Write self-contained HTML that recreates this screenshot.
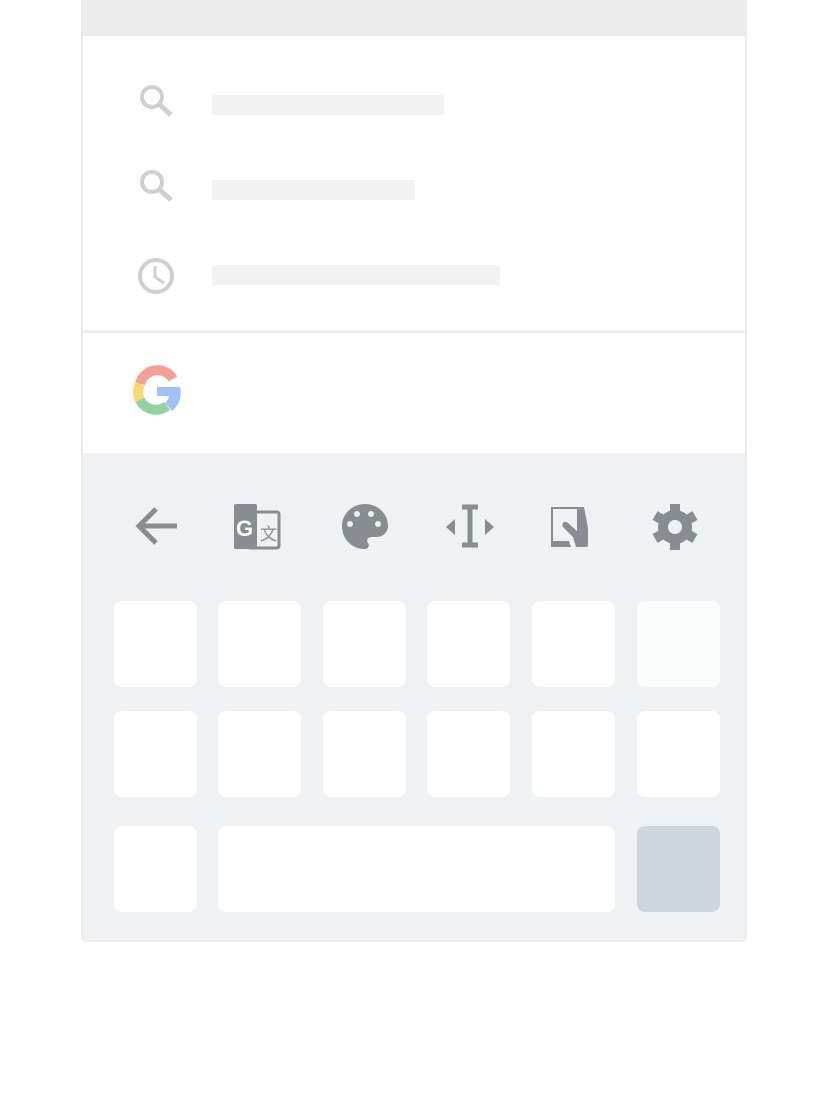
<!DOCTYPE html>
<html><head><meta charset="utf-8"><style>
body{margin:0;width:828px;height:1098px;background:#fff;position:relative;overflow:hidden;font-family:"Liberation Sans",sans-serif}
.frame{position:absolute;left:81px;top:-6px;width:662px;height:944px;border:2px solid #ebebeb;border-radius:6px;background:#fff;overflow:hidden}
.abs{position:absolute}
.key{position:absolute;background:#fff;border-radius:8px;width:83px;height:86px}
</style></head><body>
<div class="frame">
  <div class="abs" style="left:0;top:0;width:662px;height:40px;background:#ececec"></div>
  <div class="abs" style="left:129px;top:99px;width:232px;height:20px;background:#f2f2f2"></div>
  <div class="abs" style="left:129px;top:184px;width:203px;height:20px;background:#f2f2f2"></div>
  <div class="abs" style="left:129px;top:269px;width:288px;height:20px;background:#f2f2f2"></div>
  <div class="abs" style="left:0;top:334px;width:662px;height:3px;background:#ececec"></div>
  <div class="abs" style="left:0;top:457px;width:662px;height:500px;background:#eff1f2"></div>
</div>
<svg class="abs" style="left:0;top:0" width="828" height="1098">
  <g fill="none" stroke="#cfcfcf" stroke-width="4">
    <circle cx="152" cy="97" r="10"/><line x1="159" y1="104" x2="171" y2="115" stroke-width="5"/>
    <circle cx="152" cy="182" r="10"/><line x1="159" y1="189" x2="171" y2="200" stroke-width="5"/>
    <circle cx="156" cy="276" r="16"/><polyline points="155,266 155,277 164,283" stroke-width="3"/>
  </g>
  <g transform="translate(0,2)">
  <g fill="none" stroke-width="10">
    <path d="M173,377 A18,18 0 0 0 140,382" stroke="#f4a097"/>
    <path d="M140,382 A18,18 0 0 0 140,398" stroke="#fcd873"/>
    <path d="M140,398 A18,18 0 0 0 167,404" stroke="#93d3a2"/>
  </g>
  <path d="M157,385 H180 A23,23 0 0 1 172,409 L165,401 A13,13 0 0 0 169,394 H157 Z" fill="#9fc0f8"/>
  </g>
  <g fill="#868e92" stroke="#868e92">
    <path d="M177,526 H140 M156,509 L139,526 L156,543" fill="none" stroke-width="5"/>
    <rect x="234" y="504" width="23" height="45" rx="2" stroke="none"/>
    <rect x="248" y="512" width="31" height="36" rx="2" fill="none" stroke-width="3"/>
    <text x="236" y="536" font-size="22" font-weight="bold" fill="#fff" stroke="none" font-family="Liberation Sans">G</text>
    <text x="260" y="540" font-size="17" fill="#868e92" stroke="none" font-family="Liberation Sans">文</text>
    <path d="M365,504 C352,504 342,514 342,526 C342,539 352,549 364,549 C368,549 370,546 368,543 C366,540 368,537 372,537 H377 C383,537 388,532 388,526 C388,514 378,504 365,504 Z" stroke="none"/>
    <g fill="#eff1f2" stroke="none"><circle cx="350" cy="524" r="3"/><circle cx="357" cy="514" r="3"/><circle cx="371" cy="514" r="3"/><circle cx="378" cy="524" r="3"/></g>
    <path d="M462,507 H478 M470,507 V545 M462,545 H478" fill="none" stroke-width="5"/>
    <path d="M446,527 L455,519 V535 Z M494,527 L485,519 V535 Z" stroke="none"/>
    <path d="M551,507 H584 L588,528 V545 A2,2 0 0 1 586,547 H576 L573,537 L563,527 A3,3 0 0 1 568,523 L577,531 V509 H553 V541 H569 L571,547 H551 Z" stroke="none"/>
    <circle cx="675" cy="527" r="17" stroke="none"/>
    <g stroke="none"><rect x="670" y="504" width="10" height="46"/><rect x="670" y="504" width="10" height="46" transform="rotate(60 675 527)"/><rect x="670" y="504" width="10" height="46" transform="rotate(-60 675 527)"/></g>
    <circle cx="675" cy="527" r="7" fill="#eff1f2" stroke="none"/>
  </g>
</svg>
<div class="key" style="left:114px;top:601px"></div><div class="key" style="left:218px;top:601px"></div><div class="key" style="left:323px;top:601px"></div><div class="key" style="left:427px;top:601px"></div><div class="key" style="left:532px;top:601px"></div><div class="key" style="left:637px;top:601px;background:#fafbfb"></div>
<div class="key" style="left:114px;top:711px"></div><div class="key" style="left:218px;top:711px"></div><div class="key" style="left:323px;top:711px"></div><div class="key" style="left:427px;top:711px"></div><div class="key" style="left:532px;top:711px"></div><div class="key" style="left:637px;top:711px"></div>
<div class="key" style="left:114px;top:826px"></div><div class="key" style="left:218px;top:826px;width:397px"></div><div class="key" style="left:637px;top:826px;background:#cdd5dd"></div>
</body></html>
